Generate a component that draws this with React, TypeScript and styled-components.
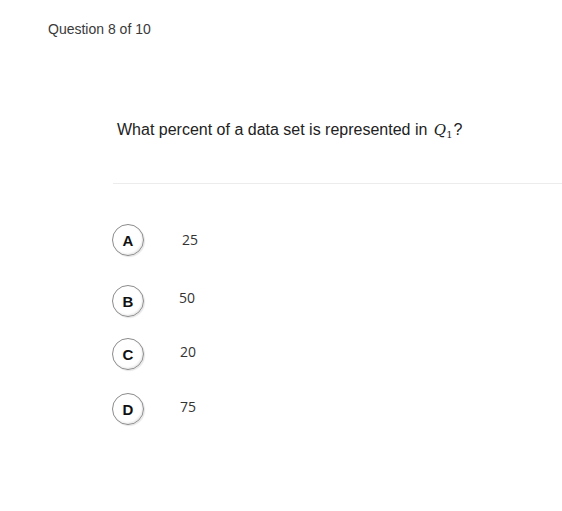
import React from 'react';
import styled, { createGlobalStyle } from 'styled-components';

const GlobalStyle = createGlobalStyle`
  html, body {
    margin: 0;
    padding: 0;
    background: #ffffff;
  }
  body {
    font-family: "Liberation Sans", Arial, sans-serif;
    color: #333333;
  }
`;

const Page = styled.main`
  width: 562px;
  height: 511px;
  overflow: hidden;
  background: #ffffff;
`;

const Counter = styled.header`
  padding: 20px 0 0 48px;
  font-size: 14px;
  line-height: 18px;
  color: #3a3a3a;
`;

const QuestionText = styled.h2`
  margin: 0;
  padding: 82px 0 0 117px;
  font-size: 16px;
  font-weight: normal;
  line-height: 20px;
  color: #222222;
`;

const MathVar = styled.span`
  font-family: "DejaVu Serif", "Liberation Serif", serif;
  font-style: italic;
  font-size: 15px;
  margin-left: 2px;
`;

const Sub = styled.sub`
  font-family: "DejaVu Serif", "Liberation Serif", serif;
  font-style: normal;
  font-size: 10px;
  vertical-align: -3px;
  margin-right: 1px;
`;

const Divider = styled.hr`
  margin: 38px 0 0 113px;
  border: 0;
  border-top: 1px solid #ececec;
  height: 0;
`;

const OptionList = styled.ol`
  list-style: none;
  margin: 0;
  padding: 0 0 0 112px;
  display: flex;
  flex-direction: column;
`;

const OptionRow = styled.li<{ $top: number }>`
  display: flex;
  align-items: center;
  height: 32px;
  margin-top: ${(p) => p.$top}px;
`;

const Bubble = styled.span`
  box-sizing: border-box;
  width: 32px;
  height: 32px;
  border-radius: 50%;
  border: 1px solid #8c8c8c;
  box-shadow: inset -1px -1px 2px rgba(0, 0, 0, 0.1), 1px 1px 1px rgba(0, 0, 0, 0.1);
  display: flex;
  align-items: center;
  justify-content: center;
  font-family: "Liberation Sans", Arial, sans-serif;
  font-weight: 700;
  font-size: 15px;
  color: #111111;
  flex-shrink: 0;
`;

const Answer = styled.span<{ $shift: number }>`
  margin-left: ${(p) => p.$shift}px;
  font-family: "Open Sans", "Liberation Sans", sans-serif;
  font-size: 14px;
  color: #333333;
  line-height: 18px;
`;

const options = [
  { key: 'A', value: '25', top: 40, shift: 38, dy: 0 },
  { key: 'B', value: '50', top: 29, shift: 35, dy: -3 },
  { key: 'C', value: '20', top: 21, shift: 36, dy: -2 },
  { key: 'D', value: '75', top: 23, shift: 36, dy: -2 },
];

export default function App() {
  return (
    <Page>
      <GlobalStyle />
      <Counter>Question 8 of 10</Counter>
      <QuestionText>
        What percent of a data set is represented in{' '}
        <MathVar>
          Q<Sub>1</Sub>
        </MathVar>
        ?
      </QuestionText>
      <Divider />
      <OptionList>
        {options.map((opt) => (
          <OptionRow key={opt.key} $top={opt.top}>
            <Bubble>{opt.key}</Bubble>
            <Answer $shift={opt.shift} style={{ transform: `translateY(${opt.dy}px)` }}>
              {opt.value}
            </Answer>
          </OptionRow>
        ))}
      </OptionList>
    </Page>
  );
}
